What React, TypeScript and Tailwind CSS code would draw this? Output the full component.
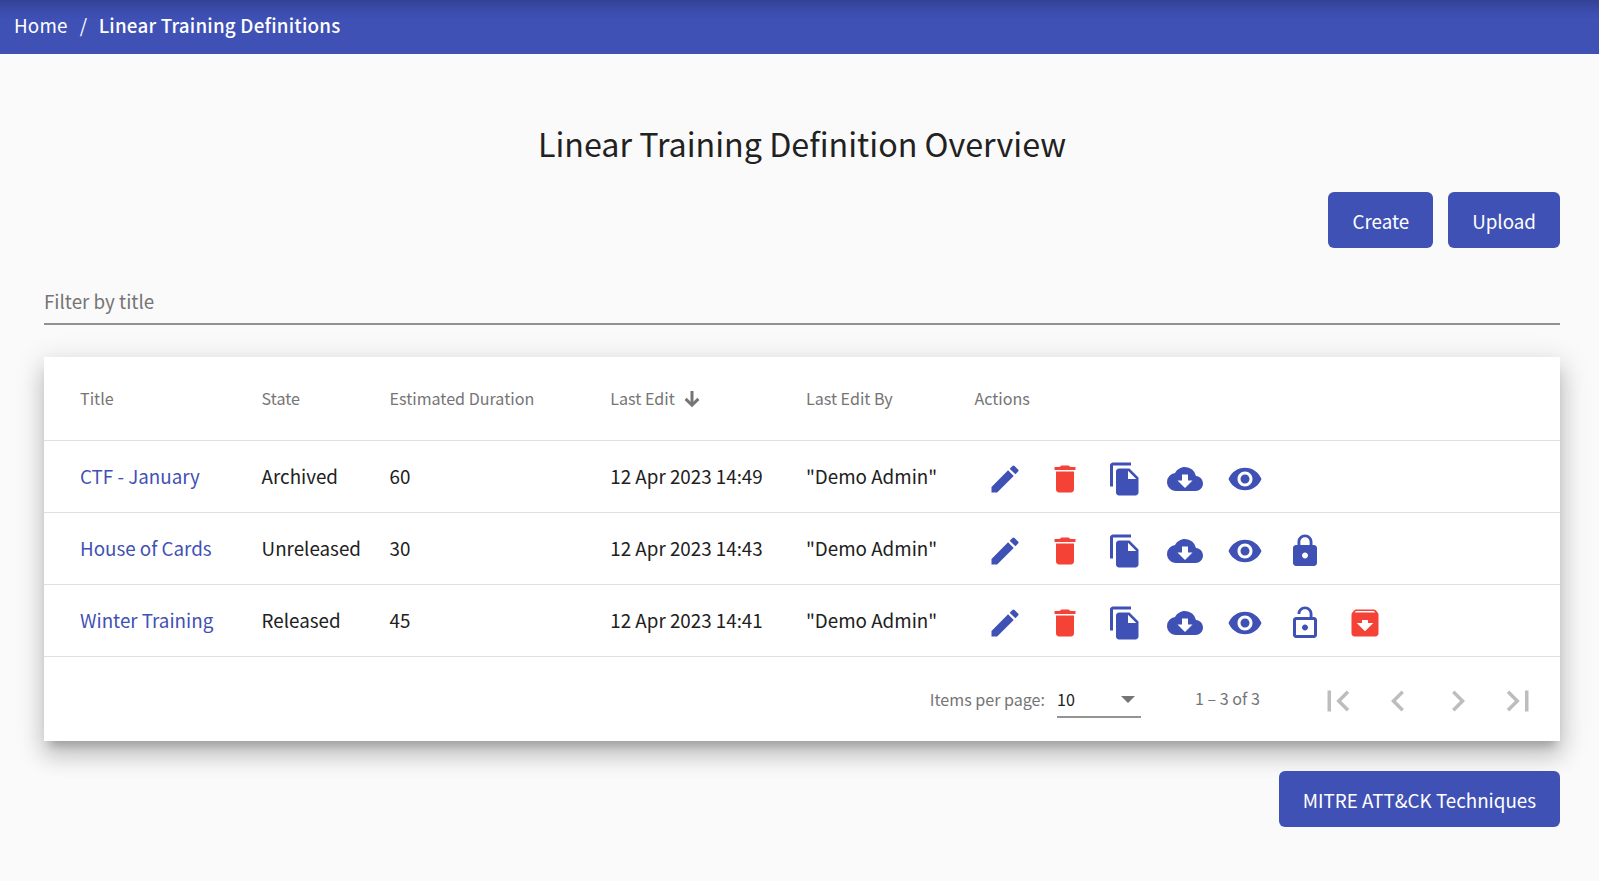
import React from 'react';
import type { IconType } from 'react-icons';
import {
  MdArchive,
  MdChevronLeft,
  MdChevronRight,
  MdCloudDownload,
  MdDelete,
  MdEdit,
  MdFileCopy,
  MdFirstPage,
  MdLastPage,
  MdLock,
  MdLockOpen,
  MdVisibility,
} from 'react-icons/md';

type Action = { label: string; icon: IconType; warn?: boolean };

const common: Action[] = [
  { label: 'Edit', icon: MdEdit },
  { label: 'Delete', icon: MdDelete, warn: true },
  { label: 'Clone', icon: MdFileCopy },
  { label: 'Download', icon: MdCloudDownload },
  { label: 'Preview', icon: MdVisibility },
];

const rows = [
  { title: 'CTF - January', state: 'Archived', duration: 60, edited: '12 Apr 2023 14:49', by: '"Demo Admin"', actions: common },
  {
    title: 'House of Cards',
    state: 'Unreleased',
    duration: 30,
    edited: '12 Apr 2023 14:43',
    by: '"Demo Admin"',
    actions: [...common, { label: 'Release', icon: MdLock }],
  },
  {
    title: 'Winter Training',
    state: 'Released',
    duration: 45,
    edited: '12 Apr 2023 14:41',
    by: '"Demo Admin"',
    actions: [...common, { label: 'Unrelease', icon: MdLockOpen }, { label: 'Archive', icon: MdArchive, warn: true }],
  },
];

const grid = 'grid grid-cols-[181.6px_127.9px_220.8px_195.7px_168.5px_1fr] pl-9 border-b border-[#e0e0e0]';

function Button({ children }: { children: React.ReactNode }) {
  return (
    <button className="h-14 rounded-md bg-[#3f51b5] px-6 pt-[15px] pb-[14px] leading-[27px] text-white">{children}</button>
  );
}

function SortArrow() {
  return (
    <svg className="mt-[5px] ml-[9.5px] h-[17px] w-[16px]" viewBox="0 0 16 17" fill="none" stroke="#757575" strokeWidth="3">
      <path d="M8 0V14" />
      <path d="M1.64 7.84L8 14.2L14.36 7.84" />
    </svg>
  );
}

export default function App() {
  return (
    <div className="flex h-[881px] flex-col overflow-hidden bg-[#fafafa] font-['Noto_Sans_CJK_SC',sans-serif] text-[18.8px] text-[#212121]">
      <header className="relative h-[54px] shrink-0 overflow-hidden bg-[#3f51b5]">
        <div className="absolute -top-8 -left-8 h-8 w-[1663px] shadow-[0_6px_14px_0_rgba(0,0,0,0.14),0_1.5px_20px_0_rgba(0,0,0,0.12)]" />
        <nav className="relative flex pt-[11px] pl-[14px] leading-[27px] tracking-[0.2px] text-white">
          <a>Home</a>
          <span className="w-[31px] pl-[12px]">/</span>
          <span className="font-medium">Linear Training Definitions</span>
        </nav>
      </header>

      <main className="flex flex-col px-[44px] pr-[39px]">
        <h1 className="mt-[66px] text-center text-[32.25px] leading-[46px]">Linear Training Definition Overview</h1>

        <div className="mt-[26px] flex justify-end gap-[15px]">
          <Button>
            <span className="-ml-px pl-[1.5px]">Create</span>
          </Button>
          <Button>Upload</Button>
        </div>

        <div className="mt-[39px] h-[36px] leading-[27px] text-[#757575]">Filter by title</div>
        <div className="h-[2px] bg-[#919191]" />

        <section className="mt-8 flex h-[384px] flex-col bg-white shadow-[0_9px_9px_-4.5px_rgba(0,0,0,0.2),0_15px_21px_1.5px_rgba(0,0,0,0.14),0_6px_27px_4.5px_rgba(0,0,0,0.12)]">
          <div className={`${grid} h-[84px] pt-[29px] text-[16.1px] leading-6 text-[#757575]`}>
            <span>Title</span>
            <span>State</span>
            <span>Estimated Duration</span>
            <span className="flex">
              Last Edit
              <SortArrow />
            </span>
            <span>Last Edit By</span>
            <span>Actions</span>
          </div>

          {rows.map((r) => (
            <div key={r.title} className={`${grid} h-[72px] pt-[20px] leading-[29px]`}>
              <a className="text-[#3f51b5]">{r.title}</a>
              <span>{r.state}</span>
              <span>{r.duration}</span>
              <span>{r.edited}</span>
              <span>{r.by}</span>
              <span className="flex gap-6 pl-[12.5px]">
                {r.actions.map(({ label, icon: Icon, warn }) => (
                  <Icon key={label} className={warn ? 'size-9 text-[#f44336]' : 'size-9 text-[#3f51b5]'} />
                ))}
              </span>
            </div>
          ))}

          <div className="flex h-[84px] justify-end pr-[12.4px] text-[16.1px] leading-6 text-[#757575]">
            <span className="mt-[30px] mr-[12px]">Items per page:</span>
            <div className="mt-[30px] flex h-[31px] w-[84px] justify-between border-b-2 border-[#949494] pr-[6px]">
              <span className="text-[#212121]">10</span>
              <svg className="mt-[9px] h-[7px] w-[14px]" viewBox="0 0 14 7" fill="#757575">
                <path d="M0 0h14L7 7z" />
              </svg>
            </div>
            <span className="mt-[29px] ml-[54px] w-[112.6px]">1 – 3 of 3</span>
            <div className="mt-[14px] flex h-[60px] text-[#bdbdbd]">
              {[MdFirstPage, MdChevronLeft, MdChevronRight, MdLastPage].map((Icon, i) => (
                <button key={i} className="flex size-[60px] items-center justify-center">
                  <Icon className="size-[42px]" />
                </button>
              ))}
            </div>
          </div>
        </section>

        <div className="mt-[30px] flex justify-end">
          <Button>{'MITRE ATT&CK Techniques'}</Button>
        </div>
      </main>
    </div>
  );
}
